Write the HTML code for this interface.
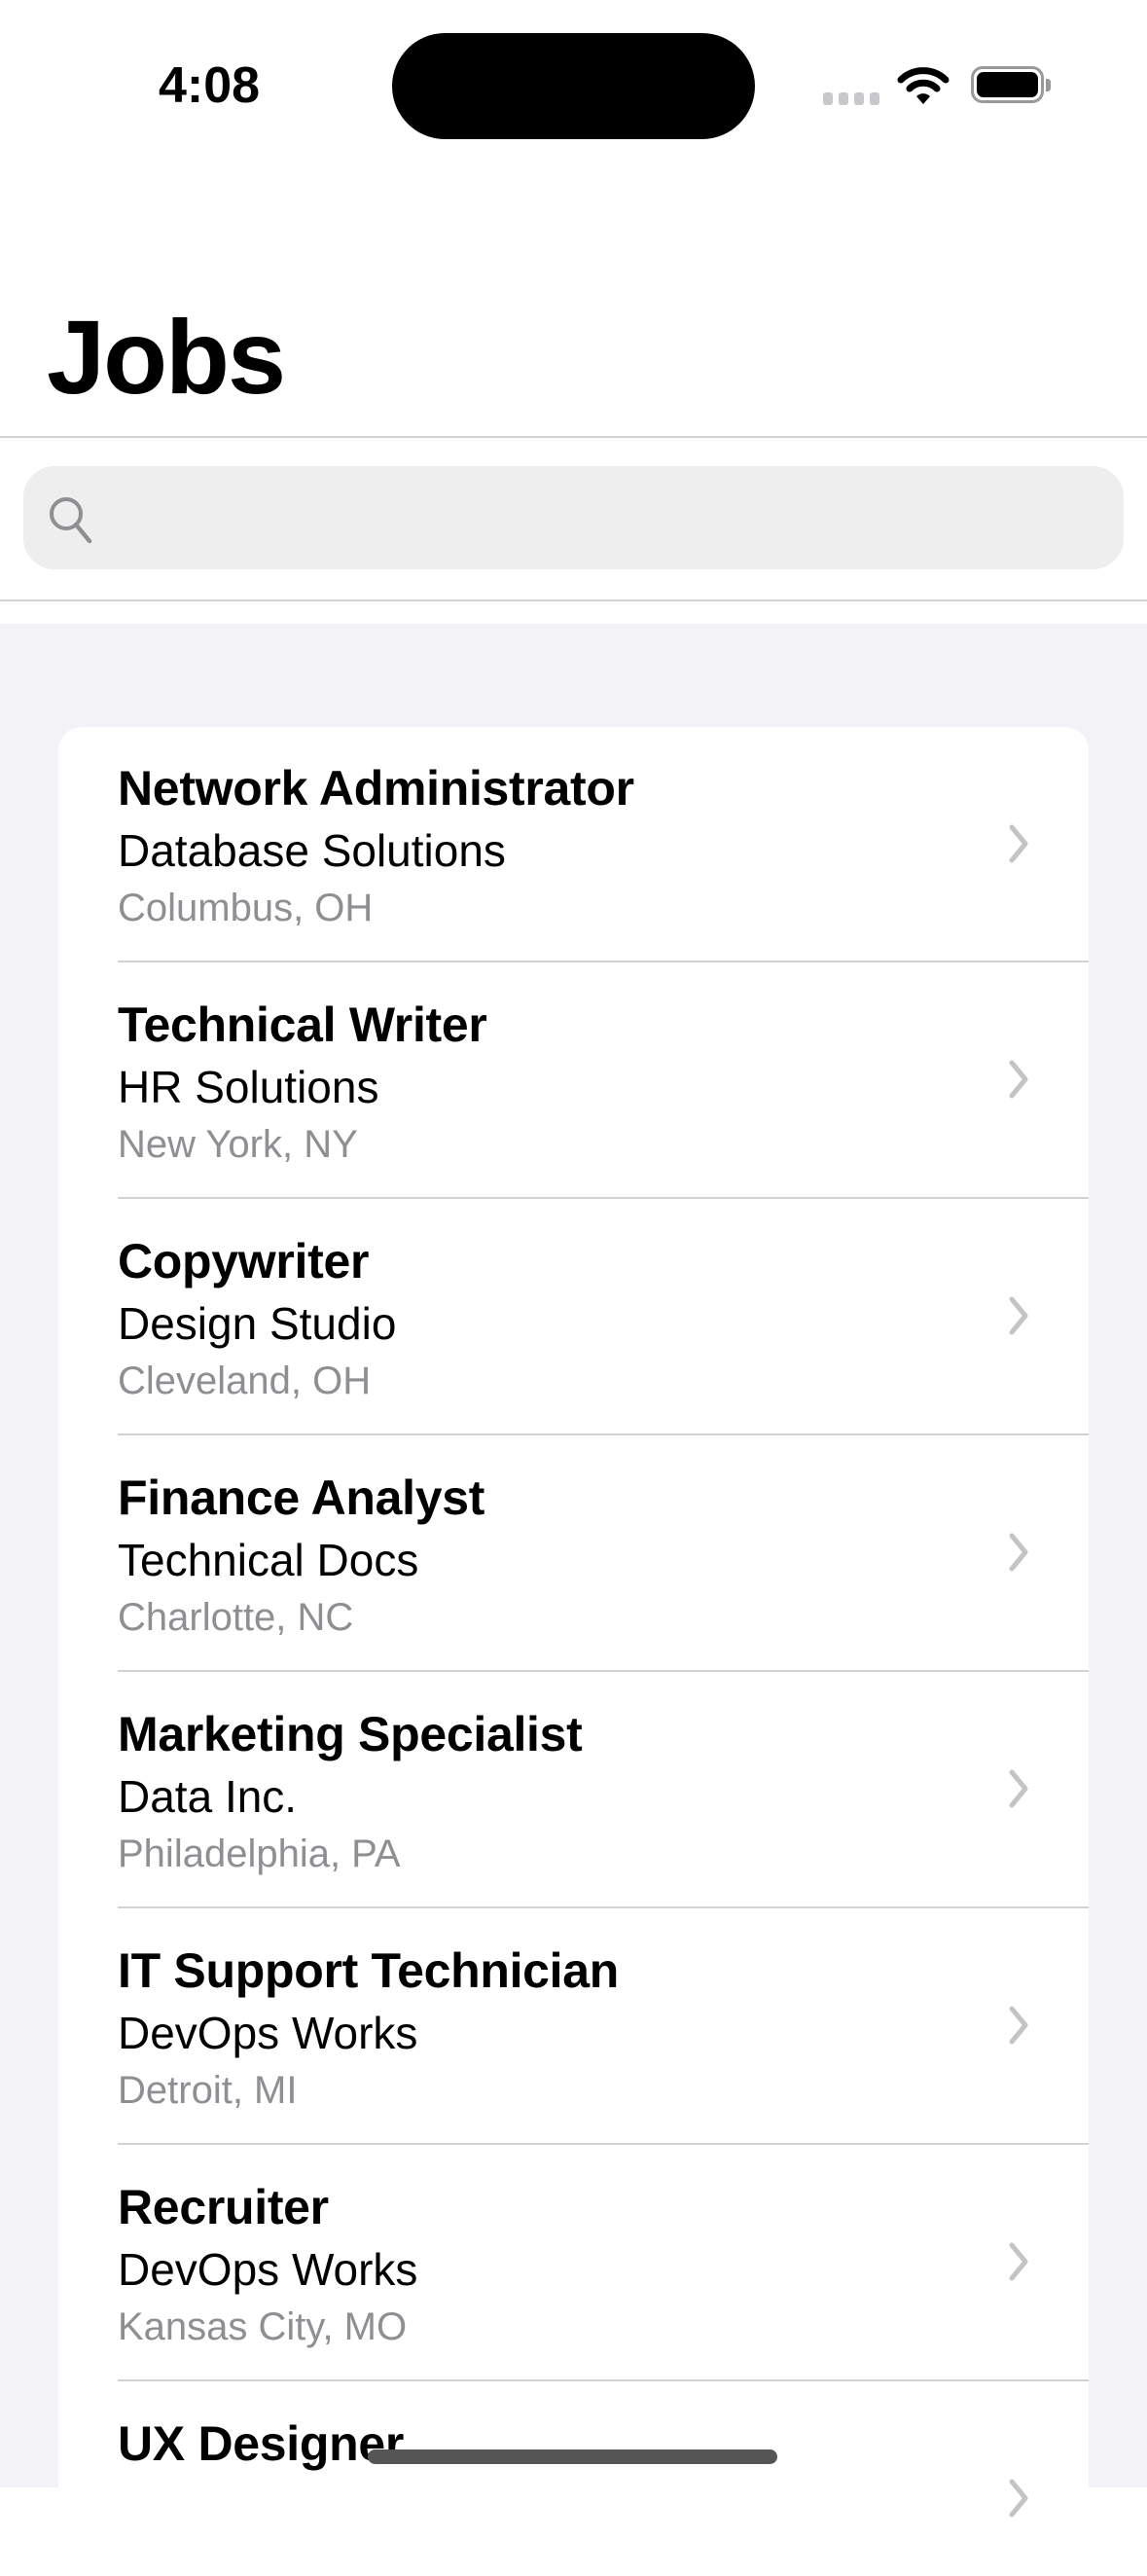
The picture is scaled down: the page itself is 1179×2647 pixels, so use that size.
<!DOCTYPE html>
<html><head><meta charset="utf-8">
<style>
*{margin:0;padding:0;box-sizing:border-box}
body{width:1179px;height:2556px;overflow:hidden;background:#fff;font-family:"Liberation Sans",sans-serif;position:relative}
.abs{position:absolute}
.t{position:absolute;left:121px;white-space:nowrap;height:60px;line-height:60px}
.title{font-size:50px;font-weight:bold;color:#000;letter-spacing:-0.3px}
.sub{font-size:46px;color:#000}
.loc{font-size:40px;color:#8e8e93}
.sep{position:absolute;left:121px;right:60px;height:2px;background:#d1d1d6}
.chev{position:absolute;left:1032px;width:30px;height:46px}
</style></head><body>
<div class="abs" style="left:160px;top:56px;font-size:52px;font-weight:bold;line-height:64px;width:110px;text-align:center">4:08</div>
<div class="abs" style="left:403px;top:34px;width:373px;height:109px;border-radius:55px;background:#000"></div>
<div class="abs" style="left:846px;top:95px;width:10px;height:13px;border-radius:3px;background:#c8c8cc"></div>
<div class="abs" style="left:862px;top:95px;width:10px;height:13px;border-radius:3px;background:#c8c8cc"></div>
<div class="abs" style="left:878px;top:95px;width:10px;height:13px;border-radius:3px;background:#c8c8cc"></div>
<div class="abs" style="left:894px;top:95px;width:10px;height:13px;border-radius:3px;background:#c8c8cc"></div>
<svg class="abs" style="left:922px;top:66px" width="54" height="42" viewBox="0 0 54 42">
<path d="M4 16 A33 33 0 0 1 50 16" stroke="#000" stroke-width="7" fill="none" stroke-linecap="round"/>
<path d="M13 25 A20 20 0 0 1 41 25" stroke="#000" stroke-width="7" fill="none" stroke-linecap="round"/>
<path d="M20 33 L27 41 L34 33 A10 10 0 0 0 20 33Z" fill="#000"/>
</svg>
<div class="abs" style="left:998px;top:68px;width:75px;height:38px;border:3px solid #999;border-radius:12px"></div>
<div class="abs" style="left:1004px;top:74px;width:63px;height:26px;background:#000;border-radius:7px"></div>
<div class="abs" style="left:1075px;top:81px;width:5px;height:13px;background:#999;border-radius:0 3px 3px 0"></div>
<div class="abs" style="left:48px;top:302px;font-size:108px;font-weight:bold;line-height:130px;letter-spacing:-2px">Jobs</div>
<div class="abs" style="left:0;top:448px;width:1179px;height:2px;background:#d1d1d6"></div>
<div class="abs" style="left:24px;top:479px;width:1131px;height:106px;border-radius:32px;background:#eeeeef"></div>
<svg class="abs" style="left:46px;top:506px" width="54" height="54" viewBox="0 0 54 54">
<circle cx="22" cy="22" r="15" stroke="#8e8e93" stroke-width="4" fill="none"/>
<path d="M32 33 L46 50" stroke="#8e8e93" stroke-width="4.5" stroke-linecap="round"/>
</svg>
<div class="abs" style="left:0;top:616px;width:1179px;height:2px;background:#d1d1d6"></div>
<div class="abs" style="left:0;top:641px;width:1179px;height:1915px;background:#f2f2f7"></div>
<div class="abs" style="left:60px;top:747px;width:1059px;height:1900px;border-radius:24px;background:#fff"></div>

<div class="t title" style="top:780px">Network Administrator</div>
<div class="t sub" style="top:844px">Database Solutions</div>
<div class="t loc" style="top:903px">Columbus, OH</div>
<svg class="chev" style="top:844px" viewBox="0 0 30 46"><path d="M8 6 L22 23 L8 40" stroke="#c4c4c6" stroke-width="5" fill="none" stroke-linecap="round" stroke-linejoin="round"/></svg>
<div class="sep" style="top:987px"></div>

<div class="t title" style="top:1023px">Technical Writer</div>
<div class="t sub" style="top:1087px">HR Solutions</div>
<div class="t loc" style="top:1146px">New York, NY</div>
<svg class="chev" style="top:1086px" viewBox="0 0 30 46"><path d="M8 6 L22 23 L8 40" stroke="#c4c4c6" stroke-width="5" fill="none" stroke-linecap="round" stroke-linejoin="round"/></svg>
<div class="sep" style="top:1230px"></div>

<div class="t title" style="top:1266px">Copywriter</div>
<div class="t sub" style="top:1330px">Design Studio</div>
<div class="t loc" style="top:1389px">Cleveland, OH</div>
<svg class="chev" style="top:1329px" viewBox="0 0 30 46"><path d="M8 6 L22 23 L8 40" stroke="#c4c4c6" stroke-width="5" fill="none" stroke-linecap="round" stroke-linejoin="round"/></svg>
<div class="sep" style="top:1473px"></div>

<div class="t title" style="top:1509px">Finance Analyst</div>
<div class="t sub" style="top:1573px">Technical Docs</div>
<div class="t loc" style="top:1632px">Charlotte, NC</div>
<svg class="chev" style="top:1572px" viewBox="0 0 30 46"><path d="M8 6 L22 23 L8 40" stroke="#c4c4c6" stroke-width="5" fill="none" stroke-linecap="round" stroke-linejoin="round"/></svg>
<div class="sep" style="top:1716px"></div>

<div class="t title" style="top:1752px">Marketing Specialist</div>
<div class="t sub" style="top:1816px">Data Inc.</div>
<div class="t loc" style="top:1875px">Philadelphia, PA</div>
<svg class="chev" style="top:1815px" viewBox="0 0 30 46"><path d="M8 6 L22 23 L8 40" stroke="#c4c4c6" stroke-width="5" fill="none" stroke-linecap="round" stroke-linejoin="round"/></svg>
<div class="sep" style="top:1959px"></div>

<div class="t title" style="top:1995px">IT Support Technician</div>
<div class="t sub" style="top:2059px">DevOps Works</div>
<div class="t loc" style="top:2118px">Detroit, MI</div>
<svg class="chev" style="top:2058px" viewBox="0 0 30 46"><path d="M8 6 L22 23 L8 40" stroke="#c4c4c6" stroke-width="5" fill="none" stroke-linecap="round" stroke-linejoin="round"/></svg>
<div class="sep" style="top:2202px"></div>

<div class="t title" style="top:2238px">Recruiter</div>
<div class="t sub" style="top:2302px">DevOps Works</div>
<div class="t loc" style="top:2361px">Kansas City, MO</div>
<svg class="chev" style="top:2301px" viewBox="0 0 30 46"><path d="M8 6 L22 23 L8 40" stroke="#c4c4c6" stroke-width="5" fill="none" stroke-linecap="round" stroke-linejoin="round"/></svg>
<div class="sep" style="top:2445px"></div>

<div class="t title" style="top:2481px">UX Designer</div>
<svg class="chev" style="top:2544px" viewBox="0 0 30 46"><path d="M8 6 L22 23 L8 40" stroke="#c4c4c6" stroke-width="5" fill="none" stroke-linecap="round" stroke-linejoin="round"/></svg>

<div class="abs" style="left:378px;top:2517px;width:421px;height:15px;border-radius:8px;background:#555"></div>
</body></html>
